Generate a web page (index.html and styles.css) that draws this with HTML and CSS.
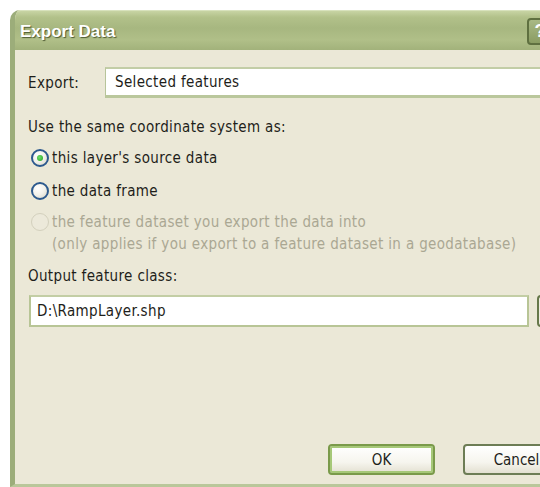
FILE: index.html
```html
<!DOCTYPE html>
<html>
<head>
<meta charset="utf-8">
<title>Export Data</title>
<link rel="stylesheet" href="styles.css">
</head>
<body>
<div class="dialog">
  <div class="titlebar">
    <span class="title">Export Data</span>
    <span class="help">?</span>
  </div>
  <div class="content">
    <div class="export-row">
      <span class="label">Export:</span>
      <div class="combo">Selected features</div>
    </div>
    <div class="section-label">Use the same coordinate system as:</div>
    <div class="radio-row first">
      <span class="radio checked"></span>
      <span>this layer's source data</span>
    </div>
    <div class="radio-row second">
      <span class="radio"></span>
      <span>the data frame</span>
    </div>
    <div class="radio-row disabled">
      <span class="radio"></span>
      <span class="lines">the feature dataset you export the data into<br>(only applies if you export to a feature dataset in a geodatabase)</span>
    </div>
    <div class="section-label output">Output feature class:</div>
    <div class="path-row">
      <div class="textbox">D:\RampLayer.shp</div>
      <span class="browse"></span>
    </div>
    <div class="buttons">
      <button class="btn default">OK</button>
      <button class="btn">Cancel</button>
    </div>
  </div>
</div>
</body>
</html>
```

FILE: styles.css
```css
html, body {
  margin: 0;
  padding: 0;
  background: #ffffff;
  overflow: hidden;
  width: 540px;
  height: 487px;
}

/* the window is wider than the view; its right part is clipped */
.dialog {
  margin: 10px 0 0 10px;
  width: 530px;
  height: 477px;
  box-sizing: border-box;
  overflow: hidden;
  display: flex;
  flex-direction: column;
  background: #ebe8d7;
  border-left: 5px solid #9cad7a;
  border-bottom: 3px solid #b9c79a;
  border-top-left-radius: 10px;
  font-family: "DejaVu Sans Condensed", "DejaVu Sans", sans-serif;
  font-size: 15px;
  letter-spacing: 0.35px;
  color: #1e1e1a;
}

/* olive title bar */
.titlebar {
  height: 40px;
  flex-shrink: 0;
  margin-left: -5px;
  border-top-left-radius: 10px;
  background: linear-gradient(180deg, #cbd7a8 0%, #b2c18a 18%, #a7b780 45%, #b0bf88 75%, #a2b27b 100%);
  box-shadow: inset 1px 1px 0 #d8e2bd;
  display: flex;
  align-items: center;
  padding-left: 10px;
}

.title {
  font-family: "Liberation Sans", Arial, sans-serif;
  font-weight: bold;
  font-size: 17px;
  letter-spacing: 0;
  color: #ffffff;
  text-shadow: 1px 1px 1px #4d5a33;
  margin-top: 3px;
}

.help {
  margin-left: auto;
  margin-right: -13px;
  width: 26px;
  height: 27px;
  flex-shrink: 0;
  box-sizing: border-box;
  border: 2px solid #5f7040;
  border-radius: 4px;
  background: linear-gradient(180deg, #a9b985, #8a9c62);
  color: #ffffff;
  font-family: "Liberation Sans", Arial, sans-serif;
  font-weight: bold;
  font-size: 18px;
  letter-spacing: 0;
  display: flex;
  align-items: center;
  justify-content: center;
  margin-top: 2px;
}

.content {
  flex: 1;
  display: flex;
  flex-direction: column;
  padding-left: 13px;
}

.export-row {
  display: flex;
  align-items: center;
  margin-top: 17px;
}

.export-row .label {
  width: 77px;
  flex-shrink: 0;
}

.combo {
  flex: 1;
  height: 31px;
  box-sizing: border-box;
  background: #ffffff;
  border: 1px solid #b7c49a;
  border-top: 2px solid #c2cda6;
  border-bottom: 3px solid #bac79c;
  border-right: none;
  display: flex;
  align-items: center;
  padding-left: 9px;
}

.section-label {
  margin-top: 19px;
  line-height: 20px;
}

.section-label.output {
  margin-top: 11px;
}

.radio-row {
  display: flex;
  align-items: center;
  line-height: 20px;
  margin-left: 3px;
  gap: 3px;
}

.radio-row.first { margin-top: 11px; }
.radio-row.second { margin-top: 13px; }

.radio {
  width: 18px;
  height: 18px;
  box-sizing: border-box;
  border-radius: 50%;
  border: 2px solid #2d5a8e;
  background: radial-gradient(circle at 35% 30%, #ffffff 0%, #f2f1ea 50%, #d6d3c4 100%);
  flex-shrink: 0;
  position: relative;
}

.radio.checked::after {
  content: "";
  position: absolute;
  left: 4px;
  top: 4px;
  width: 6px;
  height: 6px;
  border-radius: 50%;
  background: radial-gradient(circle at 40% 40%, #6fe06a, #21a121);
}

.radio-row.disabled {
  align-items: flex-start;
  color: #aaa793;
  margin-top: 11px;
}

.radio-row.disabled .radio {
  border: 1px solid #d3d0bd;
  background: #ece9da;
  margin-top: 1px;
}

.lines {
  line-height: 22px;
  margin-top: -1px;
  white-space: nowrap;
}

.path-row {
  display: flex;
  align-items: center;
  margin-top: 9px;
  margin-left: 1px;
}

.textbox {
  width: 500px;
  height: 32px;
  flex-shrink: 0;
  box-sizing: border-box;
  background: #ffffff;
  border: 2px solid #b8c596;
  border-top-color: #c3cea5;
  display: flex;
  align-items: center;
  padding-left: 6px;
}

.browse {
  margin-left: 8px;
  width: 24px;
  height: 32px;
  flex-shrink: 0;
  box-sizing: border-box;
  border: 2px solid #66784a;
  border-radius: 4px;
  background: #eeece0;
}

.buttons {
  display: flex;
  margin-top: auto;
  margin-bottom: 9px;
  margin-left: 300px;
  gap: 28px;
}

.btn {
  width: 107px;
  height: 31px;
  box-sizing: border-box;
  font-family: "DejaVu Sans Condensed", "DejaVu Sans", sans-serif;
  font-size: 15px;
  letter-spacing: 0;
  color: #1e1e1a;
  border-radius: 4px;
  border: 2px solid #6d7d55;
  background: linear-gradient(180deg, #ffffff 0%, #f6f5ee 60%, #e3e0d1 100%);
  padding: 0;
  flex-shrink: 0;
}

.btn.default {
  border: 2px solid #7a9a4a;
  box-shadow: inset 0 0 0 2px #a6c878;
}
```
